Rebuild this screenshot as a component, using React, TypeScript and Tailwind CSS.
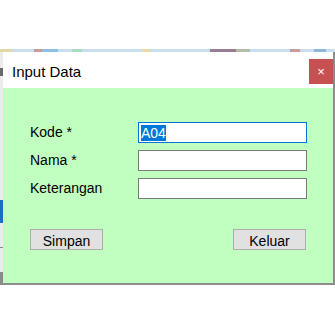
export default function App() {
  const rows = [
    { label: 'Kode *', value: 'A04', active: true },
    { label: 'Nama *', value: '', active: false },
    { label: 'Keterangan', value: '', active: false },
  ];

  return (
    <div className="h-[335px] w-[335px] overflow-hidden bg-white font-['Liberation_Sans',Arial,sans-serif] text-black">
      <div className="h-[49px]" />
      {/* background window peeking out behind the dialog */}
      <div className="flex h-[3px]">
        <div className="w-[12px] bg-[#e2d9a8]" />
        <div className="w-[22px] bg-[#c6def0]" />
        <div className="w-[8px] bg-[#c89a9a]" />
        <div className="w-[16px] bg-[#8fc0e2]" />
        <div className="w-[14px] bg-[#c6def0]" />
        <div className="w-[10px] bg-[#a6dcbf]" />
        <div className="w-[60px] bg-[#c6def0]" />
        <div className="w-[8px] bg-[#e8d9a0]" />
        <div className="w-[60px] bg-[#c6def0]" />
        <div className="w-[26px] bg-[#9a7c90]" />
        <div className="w-[14px] bg-[#b3bca6]" />
        <div className="w-[40px] bg-[#c6def0]" />
        <div className="w-[10px] bg-[#c89a9a]" />
        <div className="w-[14px] bg-[#c6def0]" />
        <div className="w-[12px] bg-[#8fb8df]" />
        <div className="flex-1 bg-[#c6def0]" />
      </div>
      <div className="flex">
        <div className="flex w-[3px] flex-col bg-[#ebebeb]">
          <div className="h-[16px]" />
          <div className="h-[8px] bg-[#6a6a6a]" />
          <div className="h-[124px]" />
          <div className="h-[23px] bg-[#1a6fc0]" />
          <div className="h-[24px]" />
          <div className="h-[1px] bg-[#888]" />
          <div className="h-[24px]" />
          <div className="h-[13px] bg-[#8a8a8a]" />
        </div>
        <div className="w-[332px] border-r-2 border-b-2 border-[#8c8c8c]">
          <div className="flex h-[36px] items-start justify-between bg-white">
            <span className="mt-[9px] ml-[9px] text-[15px]">Input Data</span>
            <div className="mt-[7px] flex h-[25px] w-[24px] items-center justify-center bg-[#c75050] text-[13px] text-white">
              ×
            </div>
          </div>
          <div className="h-[195px] bg-[#c0ffc0] pt-[34px] pl-[27px] text-[14px]">
            <div className="flex flex-col gap-[7px]">
              {rows.map((r) => (
                <div key={r.label} className="flex items-center">
                  <span className="w-[108px]">{r.label}</span>
                  <div
                    className={
                      r.active
                        ? 'flex h-[21px] w-[169px] items-center border border-[#0078d7] bg-white px-[2px]'
                        : 'flex h-[21px] w-[169px] items-center border border-[#7a7a7a] bg-white px-[2px]'
                    }
                  >
                    {r.value && (
                      <span className="bg-[#0078d7] leading-[16px] text-white">{r.value}</span>
                    )}
                  </div>
                </div>
              ))}
            </div>
            <div className="mt-[30px] flex w-[276px] justify-between">
              <button className="h-[21px] w-[73px] border border-[#adadad] bg-[#e1e1e1] pt-[2px] text-[14px] leading-none">
                Simpan
              </button>
              <button className="h-[21px] w-[73px] border border-[#adadad] bg-[#e1e1e1] pt-[2px] text-[14px] leading-none">
                Keluar
              </button>
            </div>
          </div>
        </div>
      </div>
    </div>
  );
}
